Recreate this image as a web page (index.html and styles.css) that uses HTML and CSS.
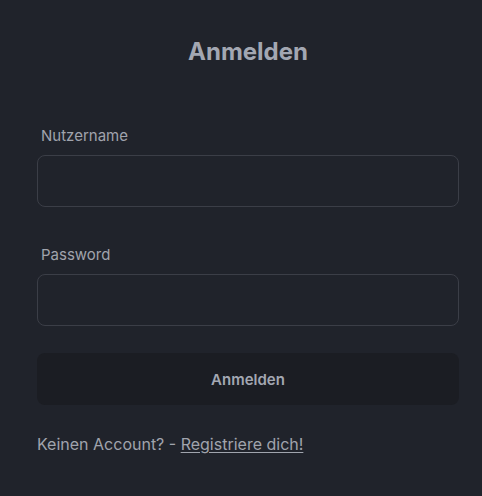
FILE: index.html
```html
<!DOCTYPE html>
<html lang="de">
<head>
<meta charset="utf-8">
<link rel="stylesheet" href="styles.css">
</head>
<body>
<main class="card">
  <h1 class="title">Anmelden</h1>
  <form class="form">
    <label class="field">
      <span class="label">Nutzername</span>
      <input class="input" type="text">
    </label>
    <label class="field">
      <span class="label">Password</span>
      <input class="input" type="password">
    </label>
    <button class="btn" type="button">Anmelden</button>
  </form>
  <p class="footer">Keinen Account? - <a class="link" href="#">Registriere dich!</a></p>
</main>
</body>
</html>
```
FILE: styles.css
```css
html, body { margin: 0; padding: 0; background: #20232b; }
body { font-family: Inter, "Noto Sans", sans-serif; color: #9fa3ad; }
.card { width: 422px; margin-left: 37px; padding-top: 36px; }
.title { margin: 0; text-align: center; font-size: 24px; font-weight: 700; color: #a3a7b2; line-height: 32px; }
.form { display: flex; flex-direction: column; margin-top: 58px; }
.field { display: flex; flex-direction: column; }
.field + .field { margin-top: 38px; }
.label { font-size: 15px; line-height: 20px; color: #a0a4ad; padding-left: 4px; margin-bottom: 9px; }
.input { height: 52px; box-sizing: border-box; border: 1px solid #3b3e47; border-radius: 8px; background: #20232b; outline: none; color: #d0d3da; font: inherit; padding: 0 12px; }
.btn { height: 52px; border: none; border-radius: 8px; background: #1b1d23; color: #a3a7b2; font-family: inherit; font-size: 15px; font-weight: 600; margin-top: 27px; }
.footer { margin: 28px 0 0; font-size: 16px; line-height: 22px; color: #a0a4ad; }
.link { color: #a0a4ad; text-decoration: underline; text-underline-offset: 2px; }
```
